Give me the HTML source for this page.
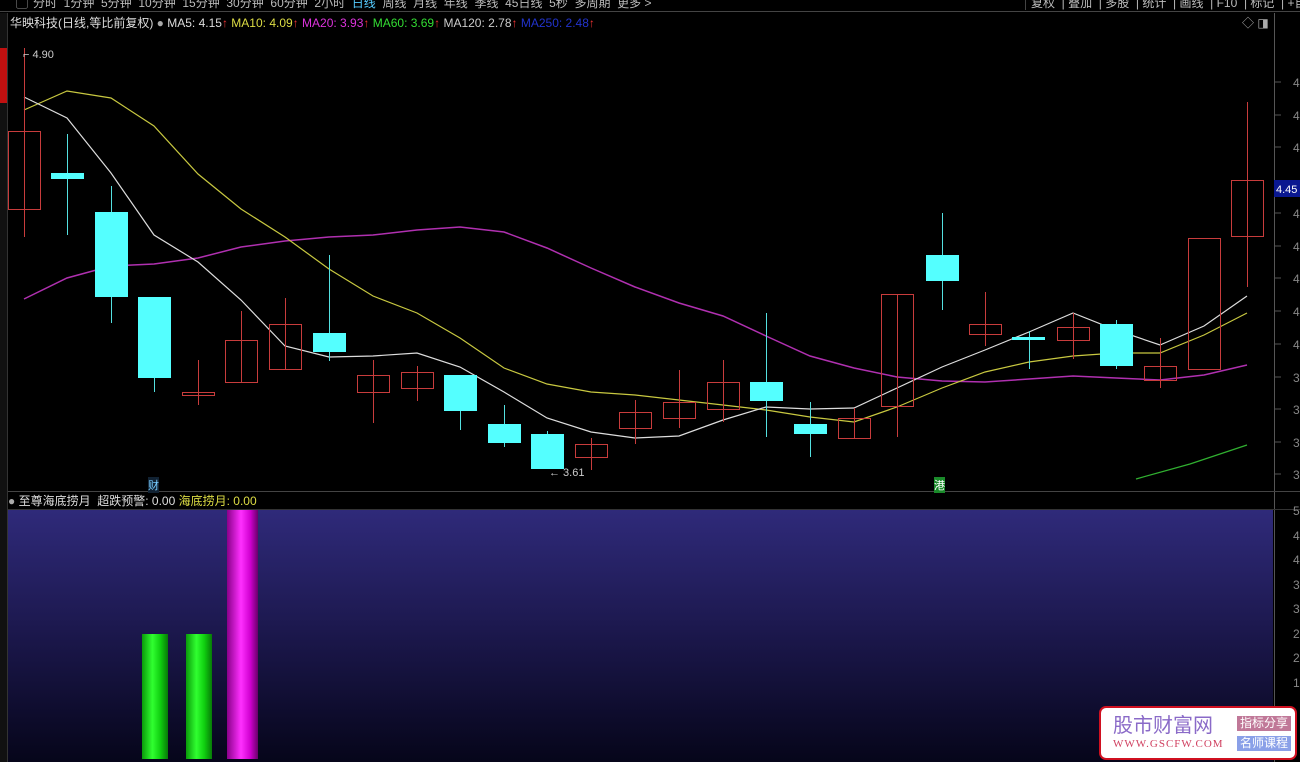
<!DOCTYPE html>
<html><head><meta charset="utf-8"><style>
*{margin:0;padding:0;box-sizing:border-box}
body{width:1300px;height:762px;background:#000;overflow:hidden;position:relative;font-family:"Liberation Sans","Noto Sans CJK SC",sans-serif;color:#ccc}
.top{position:absolute;left:0;top:-4px;height:16px;width:1300px;font-size:12px;line-height:14px;color:#bbb;white-space:nowrap}
.top span{position:absolute}
.tb{position:absolute;top:0;left:0;width:1300px;height:12px;border-bottom:1px solid #444}
.t{position:absolute;font-size:12px;white-space:nowrap}
</style></head><body>
<div class="tb"></div>
<div class="top">
<span style="left:16px">▢</span>
<span style="left:33px">分时 &nbsp;1分钟 &nbsp;5分钟 &nbsp;10分钟 &nbsp;15分钟 &nbsp;30分钟 &nbsp;60分钟 &nbsp;2小时 &nbsp;<b style="color:#5cf;font-weight:normal">日线</b> &nbsp;周线 &nbsp;月线 &nbsp;年线 &nbsp;季线 &nbsp;45日线 &nbsp;5秒 &nbsp;多周期 &nbsp;更多 &gt;</span>
<span style="left:1025px;border-left:1px solid #444;padding-left:5px">复权 &nbsp;| 叠加 &nbsp;| 多股 &nbsp;| 统计 &nbsp;| 画线 &nbsp;| F10 &nbsp;| 标记 &nbsp;| +自选 | 返</span>
</div>
<div style="position:absolute;left:0;top:13px;width:8px;height:749px;background:#111;border-right:1px solid #333"></div>
<div style="position:absolute;left:0;top:48px;width:7px;height:55px;background:#c01010"></div>
<div class="t" style="left:10px;top:14px;color:#ddd">华映科技(日线,等比前复权) <span style="color:#aaa">●</span> MA5: 4.15<span style="color:#e33">↑</span> <span style="color:#dd4">MA10: 4.09</span><span style="color:#e33">↑</span> <span style="color:#d3d">MA20: 3.93</span><span style="color:#e33">↑</span> <span style="color:#3d3">MA60: 3.69</span><span style="color:#e33">↑</span> <span style="color:#ccc">MA120: 2.78</span><span style="color:#e33">↑</span> <span style="color:#23c">MA250: 2.48</span><span style="color:#e33">↑</span></div>
<div class="t" style="left:1242px;top:14px;color:#aaa">◇ ◨</div>
<svg style="position:absolute;left:0;top:0" width="1300" height="762">
<defs>
<linearGradient id="bg" x1="0" y1="0" x2="0" y2="1"><stop offset="0" stop-color="#2f2a7a"/><stop offset=".45" stop-color="#1d1950"/><stop offset="1" stop-color="#06051a"/></linearGradient>
<linearGradient id="gr" x1="0" y1="0" x2="1" y2="0"><stop offset="0" stop-color="#0a9a0a"/><stop offset=".4" stop-color="#30ff30"/><stop offset=".7" stop-color="#10d010"/><stop offset="1" stop-color="#077a07"/></linearGradient>
<linearGradient id="mg" x1="0" y1="0" x2="1" y2="0"><stop offset="0" stop-color="#8a008a"/><stop offset=".45" stop-color="#ff30ff"/><stop offset=".75" stop-color="#d000d0"/><stop offset="1" stop-color="#6a006a"/></linearGradient>
</defs>
<line x1="1274.5" y1="13" x2="1274.5" y2="762" stroke="#555"/>
<line x1="8" y1="491.5" x2="1300" y2="491.5" stroke="#444"/>
<line x1="8" y1="509.5" x2="1300" y2="509.5" stroke="#333"/>
<g stroke="#555">
<line x1="1275" y1="82" x2="1281" y2="82"/><line x1="1275" y1="115" x2="1281" y2="115"/><line x1="1275" y1="147" x2="1281" y2="147"/><line x1="1275" y1="213" x2="1281" y2="213"/><line x1="1275" y1="246" x2="1281" y2="246"/><line x1="1275" y1="278" x2="1281" y2="278"/><line x1="1275" y1="311" x2="1281" y2="311"/><line x1="1275" y1="344" x2="1281" y2="344"/><line x1="1275" y1="377" x2="1281" y2="377"/><line x1="1275" y1="409" x2="1281" y2="409"/><line x1="1275" y1="442" x2="1281" y2="442"/><line x1="1275" y1="474" x2="1281" y2="474"/>
</g>
<g fill="#888" font-size="12" font-family="Liberation Sans">
<text x="1293" y="87">4</text><text x="1293" y="120">4</text><text x="1293" y="152">4</text><text x="1293" y="218">4</text><text x="1293" y="251">4</text><text x="1293" y="283">4</text><text x="1293" y="316">4</text><text x="1293" y="349">4</text><text x="1293" y="382">3</text><text x="1293" y="414">3</text><text x="1293" y="447">3</text><text x="1293" y="479">3</text>
<text x="1293" y="515">5</text><text x="1293" y="540">4</text><text x="1293" y="564">4</text><text x="1293" y="589">3</text><text x="1293" y="613">3</text><text x="1293" y="638">2</text><text x="1293" y="662">2</text><text x="1293" y="687">1</text>
</g>
<rect x="1274" y="180" width="26" height="17" fill="#0a1890"/>
<text x="1276" y="193" fill="#fff" font-size="11" font-family="Liberation Sans">4.45</text>
<rect x="8" y="510" width="1265" height="252" fill="url(#bg)"/>
<rect x="142" y="634" width="26" height="125" fill="url(#gr)"/>
<rect x="186" y="634" width="26" height="125" fill="url(#gr)"/>
<rect x="227" y="510" width="31" height="249" fill="url(#mg)"/>
<polyline fill="none" stroke="#b030b0" stroke-width="1.5" points="24,299 67,278 111,266 154,264 198,258 241,247 285,241 329,237 373,235 417,230 460,227 504,232 547,248 591,268 635,287 679,303 723,316 766,336 810,356 854,368 897,377 942,381 985,382 1029,379 1073,376 1116,378 1160,380 1204,375 1247,365"/>
<polyline fill="none" stroke="#c8c840" stroke-width="1.2" points="24,110 67,91 111,98 154,126 198,174 241,209 285,237 329,269 373,296 417,313 460,338 504,368 547,384 591,392 635,395 679,400 723,405 766,410 810,417 854,422 897,407 942,388 985,372 1029,362 1073,356 1116,353 1160,353 1204,335 1247,313"/>
<polyline fill="none" stroke="#ddd" stroke-width="1.2" points="24,97 67,118 111,173 154,235 198,262 241,300 285,346 329,357 373,356 417,353 460,367 504,392 547,418 591,432 635,438 679,436 723,420 766,407 810,409 854,408 897,388 942,367 985,350 1029,332 1073,313 1116,330 1160,345 1204,326 1247,296"/>
<polyline fill="none" stroke="#30b030" stroke-width="1.2" points="1136,479 1190,464 1247,445"/>
<g stroke="#c83c3c" fill="none">
<line x1="24.5" y1="48" x2="24.5" y2="237"/><rect x="8.5" y="131.5" width="32" height="78"/>
<line x1="198.5" y1="360" x2="198.5" y2="405"/><rect x="182.5" y="392.5" width="32" height="3"/>
<line x1="241.5" y1="311" x2="241.5" y2="382"/><rect x="225.5" y="340.5" width="32" height="42"/>
<line x1="285.5" y1="298" x2="285.5" y2="369"/><rect x="269.5" y="324.5" width="32" height="45"/>
<line x1="373.5" y1="360" x2="373.5" y2="423"/><rect x="357.5" y="375.5" width="32" height="17"/>
<line x1="417.5" y1="366" x2="417.5" y2="401"/><rect x="401.5" y="372.5" width="32" height="16"/>
<line x1="591.5" y1="438" x2="591.5" y2="470"/><rect x="575.5" y="444.5" width="32" height="13"/>
<line x1="635.5" y1="400" x2="635.5" y2="444"/><rect x="619.5" y="412.5" width="32" height="16"/>
<line x1="679.5" y1="370" x2="679.5" y2="428"/><rect x="663.5" y="402.5" width="32" height="16"/>
<line x1="723.5" y1="360" x2="723.5" y2="422"/><rect x="707.5" y="382.5" width="32" height="27"/>
<line x1="854.5" y1="408" x2="854.5" y2="438"/><rect x="838.5" y="418.5" width="32" height="20"/>
<line x1="897.5" y1="294" x2="897.5" y2="437"/><rect x="881.5" y="294.5" width="32" height="112"/>
<line x1="985.5" y1="292" x2="985.5" y2="346"/><rect x="969.5" y="324.5" width="32" height="10"/>
<line x1="1073.5" y1="313" x2="1073.5" y2="359"/><rect x="1057.5" y="327.5" width="32" height="13"/>
<line x1="1160.5" y1="338" x2="1160.5" y2="388"/><rect x="1144.5" y="366.5" width="32" height="14"/>
<rect x="1188.5" y="238.5" width="32" height="131"/>
<line x1="1247.5" y1="102" x2="1247.5" y2="287"/><rect x="1231.5" y="180.5" width="32" height="56"/>
</g>
<g stroke="#54e0e0" fill="#54ffff">
<line x1="67.5" y1="134" x2="67.5" y2="235"/><rect x="51" y="173" width="33" height="6" stroke="none"/>
<line x1="111.5" y1="186" x2="111.5" y2="323"/><rect x="95" y="212" width="33" height="85" stroke="none"/>
<line x1="154.5" y1="378" x2="154.5" y2="392"/><rect x="138" y="297" width="33" height="81" stroke="none"/>
<line x1="329.5" y1="255" x2="329.5" y2="361"/><rect x="313" y="333" width="33" height="19" stroke="none"/>
<line x1="460.5" y1="411" x2="460.5" y2="430"/><rect x="444" y="375" width="33" height="36" stroke="none"/>
<line x1="504.5" y1="405" x2="504.5" y2="447"/><rect x="488" y="424" width="33" height="19" stroke="none"/>
<line x1="547.5" y1="431" x2="547.5" y2="469"/><rect x="531" y="434" width="33" height="35" stroke="none"/>
<line x1="766.5" y1="313" x2="766.5" y2="437"/><rect x="750" y="382" width="33" height="19" stroke="none"/>
<line x1="810.5" y1="402" x2="810.5" y2="457"/><rect x="794" y="424" width="33" height="10" stroke="none"/>
<line x1="942.5" y1="213" x2="942.5" y2="310"/><rect x="926" y="255" width="33" height="26" stroke="none"/>
<line x1="1029.5" y1="331" x2="1029.5" y2="369"/><rect x="1012" y="337" width="33" height="3" stroke="none"/>
<line x1="1116.5" y1="320" x2="1116.5" y2="369"/><rect x="1100" y="324" width="33" height="42" stroke="none"/>
</g>
<g fill="#ccc" font-size="11" font-family="Liberation Sans">
<text x="23" y="58">⌐ 4.90</text>
<text x="549" y="476">← 3.61</text>
</g>
</svg>
<div class="t" style="left:148px;top:477px;font-size:11px;color:#7cf;background:#123">财</div>
<div class="t" style="left:934px;top:477px;font-size:11px;color:#fff;background:#1a8a2a">港</div>
<div class="t" style="left:8px;top:492px;color:#ddd"><span style="color:#aaa">●</span> 至尊海底捞月 &nbsp;超跌预警: 0.00 <span style="color:#dd4">海底捞月: 0.00</span></div>
<div style="position:absolute;left:1099px;top:706px;width:198px;height:54px;background:#fff;border:2px solid #d01020;border-radius:7px">
<div style="position:absolute;left:12px;top:3px;font-size:20px;color:#8a6ac8;font-family:'Noto Sans CJK SC',sans-serif;line-height:26px">股市财富网</div>
<div style="position:absolute;left:12px;top:30px;font-size:11px;color:#d04060;font-family:'Liberation Serif',serif;letter-spacing:1px">WWW.GSCFW.COM</div>
<div style="position:absolute;left:136px;top:8px;width:54px;height:15px;background:#c07898;color:#fff;font-size:12px;line-height:15px;text-align:center">指标分享</div>
<div style="position:absolute;left:136px;top:28px;width:54px;height:15px;background:#8aa0e8;color:#fff;font-size:12px;line-height:15px;text-align:center">名师课程</div>
</div>
</body></html>
